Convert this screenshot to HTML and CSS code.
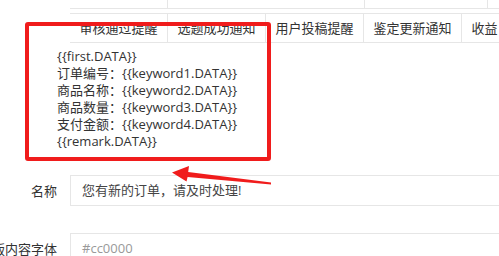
FILE: index.html
```html
<!DOCTYPE html>
<html lang="zh-CN">
<head>
    <meta charset="UTF-8">
    <meta name="viewport" content="width=device-width, initial-scale=1.0">
    <title>模板消息设置</title>
    <link rel="stylesheet" href="styles.css">
</head>
<body>

<div class="tabs">
    <div class="tab-row tab-row-prev">
        <div class="tab tab-a"></div>
        <div class="tab tab-b"></div>
        <div class="tab tab-c"></div>
    </div>
    <div class="tab-row">
        <div class="tab">审核通过提醒</div>
        <div class="tab">选题成功通知</div>
        <div class="tab">用户投稿提醒</div>
        <div class="tab">鉴定更新通知</div>
        <div class="tab">收益</div>
    </div>
</div>

<div class="preview">
    <div>{{first.DATA}}</div>
    <div>订单编号：{{keyword1.DATA}}</div>
    <div>商品名称：{{keyword2.DATA}}</div>
    <div>商品数量：{{keyword3.DATA}}</div>
    <div>支付金额：{{keyword4.DATA}}</div>
    <div>{{remark.DATA}}</div>
</div>

<div class="form">
    <div class="form-row">
        <div class="form-label">名称</div>
        <div class="form-input">您有新的订单，请及时处理!</div>
    </div>
    <div class="form-row">
        <div class="form-label"><span>版内容字体</span></div>
        <div class="form-input placeholder">#cc0000</div>
    </div>
</div>

<!-- annotation marks drawn over the screenshot -->
<div class="mark-box"></div>
<svg class="mark-arrow" width="499" height="256" viewBox="0 0 499 256">
    <polygon points="172,172.5 189,166 188.2,172 271,182.4 271,184.6 187.6,177 186.5,181.5" fill="#f01c1c"/>
</svg>

</body>
</html>
```

FILE: styles.css
```css
body {
    font-family: 'Open Sans', 'Noto Sans CJK SC', sans-serif;
    font-size: 13px;
    margin: 0;
    padding: 0;
    background-color: #fff;
    color: #333;
    overflow: hidden;
    width: 499px;
    height: 256px;
    position: relative;
}
.tabs {
    margin-top: -21px;
    margin-left: 70px;
    width: 429px;
    overflow: hidden;
}
.tab-row {
    display: flex;
    border-top: 1px solid #e6e6e6;
    border-bottom: 1px solid #e6e6e6;
    height: 28px;
    margin-top: 4px;
}
.tab-row-prev {
    margin-top: 0;
}
.tab {
    flex: none;
    padding: 0 9.5px;
    line-height: 28px;
    border-right: 1px solid #e6e6e6;
    white-space: nowrap;
}
.tab-a {
    width: 78px;
}
.tab-b {
    width: 177px;
}
.tab-c {
    width: 103px;
}
.preview {
    margin-top: 5px;
    padding-left: 57px;
    line-height: 17px;
    color: #333;
}
.form {
    margin-top: 25px;
    width: 640px;
}
.form-row {
    display: flex;
    align-items: center;
    margin-bottom: 27px;
}
.form-label {
    flex: 0 0 57px;
    min-width: 0;
    display: flex;
    justify-content: flex-end;
    white-space: nowrap;
    margin-right: 13px;
    color: #333;
}
.form-input {
    flex: 1;
    height: 29px;
    line-height: 29px;
    border: 1px solid #e6e6e6;
    padding-left: 11px;
    color: #444;
}
.form-input.placeholder {
    color: #999;
}
.mark-box {
    position: absolute;
    left: 25px;
    top: 22px;
    width: 238px;
    height: 131px;
    border: 4px solid #f01c1c;
    border-radius: 3px;
}
.mark-arrow {
    position: absolute;
    left: 0;
    top: 0;
}
```
